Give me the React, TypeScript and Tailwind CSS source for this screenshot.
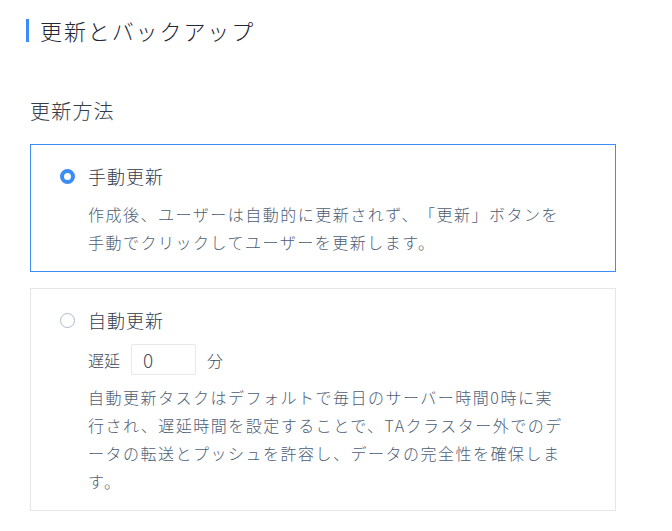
import { useState } from 'react'

type Mode = 'manual' | 'auto'

function Radio({ checked }: { checked: boolean }) {
  return checked ? (
    <span className="box-border w-[15px] h-[15px] rounded-full border-[4.5px] border-[#3b8cf5] bg-white shrink-0" />
  ) : (
    <span className="box-border w-[15px] h-[15px] rounded-full border border-[#aeb9c5] bg-white shrink-0" />
  )
}

export default function App() {
  const [mode, setMode] = useState<Mode>('manual')
  const [delay, setDelay] = useState('0')

  return (
    <div
      className="w-[672px] h-[531px] bg-white text-[#2b3443] font-light overflow-hidden [text-spacing-trim:space-all]"
      style={{ fontFamily: '"Noto Sans CJK JP", "Noto Sans", sans-serif' }}
    >
      {/* 見出し */}
      <div className="flex items-center gap-[11px] pl-[26px] pt-[14px] h-[46px]">
        <span className="w-[3px] h-[23px] bg-[#3b8cf5]" />
        <h1 className="text-[22px] leading-[32px] tracking-[1.9px] text-[#1f2734]">更新とバックアップ</h1>
      </div>

      <div className="px-[30px] pt-[50px]">
        <h2 className="text-[20px] leading-[30px] tracking-[1.2px] text-[#333c4b]">更新方法</h2>

        <div className="mt-[18px] flex flex-col gap-[16px] w-[586px]">
          {/* 手動更新 */}
          <div
            onClick={() => setMode('manual')}
            className={`border pl-[29px] pt-[17px] pb-[15px] cursor-pointer ${
              mode === 'manual' ? 'border-[#3d8ef2]' : 'border-[#e6e6e6]'
            }`}
          >
            <div className="flex items-center gap-[13px] h-[28px]">
              <Radio checked={mode === 'manual'} />
              <span className="text-[18px] tracking-[1px] text-[#333c4b]">手動更新</span>
            </div>
            <p className="mt-[10px] ml-[28px] w-[480px] text-[16px] leading-[28px] tracking-[1.5px] text-[#4d5d75]">
              作成後、ユーザーは自動的に更新されず、「更新」ボタンを手動でクリックしてユーザーを更新します。
            </p>
          </div>

          {/* 自動更新 */}
          <div
            onClick={() => setMode('auto')}
            className={`border pl-[29px] pt-[17px] pb-[15px] cursor-pointer ${
              mode === 'auto' ? 'border-[#3d8ef2]' : 'border-[#e6e6e6]'
            }`}
          >
            <div className="flex items-center gap-[13px] h-[28px]">
              <Radio checked={mode === 'auto'} />
              <span className="text-[18px] tracking-[1px] text-[#333c4b]">自動更新</span>
            </div>
            <div className="mt-[10px] ml-[28px] flex items-center gap-[11px] h-[31px]">
              <span className="text-[16px] text-[#414b5c]">遅延</span>
              <input
                value={delay}
                onChange={(e) => setDelay(e.target.value)}
                className="w-[65px] h-[31px] border border-[#e8e8e8] rounded-[2px] px-[11px] text-[19px] font-light text-[#414b5c] outline-none"
              />
              <span className="text-[16px] text-[#414b5c]">分</span>
            </div>
            <p className="mt-[8px] ml-[28px] w-[480px] text-[16px] leading-[28px] tracking-[1.5px] text-[#4d5d75]">
              自動更新タスクはデフォルトで毎日のサーバー時間0時に実行され、遅延時間を設定することで、TAクラスター外でのデータの転送とプッシュを許容し、データの完全性を確保します。
            </p>
          </div>
        </div>
      </div>
    </div>
  )
}
